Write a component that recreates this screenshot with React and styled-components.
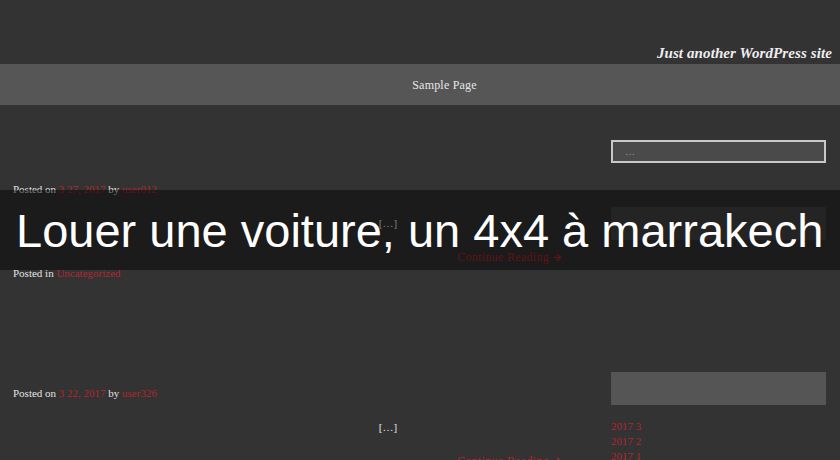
import styled, { createGlobalStyle } from "styled-components";
import { FaArrowRight } from "react-icons/fa";

const GlobalStyle = createGlobalStyle`
  html, body {
    margin: 0;
    padding: 0;
    background: #333;
  }
`;

const Page = styled.div`
  position: relative;
  width: 840px;
  height: 460px;
  overflow: hidden;
  background: #333333;
  font-family: "Liberation Serif", "DejaVu Serif", serif;
  color: #e2e2e2;
`;

const Header = styled.header`
  height: 64px;
  display: flex;
  justify-content: flex-end;
  align-items: flex-end;
  padding-right: 8px;
  box-sizing: border-box;

  .tagline {
    font-size: 15px;
    font-weight: bold;
    font-style: italic;
    color: #eeeeee;
    line-height: 1;
    margin-bottom: 3px;
    letter-spacing: 0.1px;
  }
`;

const Nav = styled.nav`
  height: 41px;
  background: #565656;
  display: flex;
  justify-content: center;
  align-items: center;
  font-size: 12px;
  color: #e6e6e6;

  span {
    padding-left: 49px;
    padding-top: 2px;
    letter-spacing: 0.2px;
  }
`;

const Main = styled.div`
  display: flex;
  align-items: flex-start;
`;

const Content = styled.main`
  width: 611px;
  flex-shrink: 0;
`;

const Post = styled.article`
  padding: 77px 0 0 13px;
  margin-bottom: 29px;
  font-size: 11px;
  line-height: 14px;
`;

const Meta = styled.div`
  color: #e2e2e2;
  margin-top: ${p => p.$gap || 0}px;
`;

const Link = styled.a`
  color: #b0282e;
  text-decoration: none;
`;

const Excerpt = styled.div`
  width: 553px;
  text-align: center;
  padding-left: 197px;
  box-sizing: border-box;
  margin-top: 20px;
  color: #e6e6e6;
`;

const More = styled.div`
  width: 553px;
  text-align: right;
  padding-right: 4px;
  box-sizing: border-box;
  margin-top: 20px;
  font-size: 12px;

  a {
    display: inline-flex;
    align-items: center;
    gap: 4px;
    letter-spacing: 0.3px;
  }
`;

const Sidebar = styled.aside`
  width: 215px;
  padding-top: 35px;
`;

const Search = styled.input`
  display: block;
  width: 215px;
  height: 23px;
  box-sizing: border-box;
  background: #4a4a4a;
  border: 2px solid #c8c8c8;
  padding: 0 12px;
  font-family: "Liberation Serif", serif;
  font-size: 10px;
  color: #ccc;
  outline: none;

  &::placeholder {
    color: #999;
  }
`;

const WidgetTitle = styled.div`
  height: 33px;
  background: ${p => p.$bg};
  margin-top: ${p => p.$gap}px;
`;

const ArchiveList = styled.ul`
  list-style: none;
  margin: 14px 0 0;
  padding: 0;
  font-size: 11px;
  line-height: 15px;
`;

const Overlay = styled.div`
  position: absolute;
  left: 0;
  right: 0;
  top: 190px;
  height: 80px;
  background: rgba(0, 0, 0, 0.47);
  display: flex;
  align-items: center;
  padding-left: 16px;
  box-sizing: border-box;

  h1 {
    margin: 0;
    font-family: "Liberation Sans", Arial, sans-serif;
    font-weight: normal;
    font-size: 47px;
    color: #ffffff;
    white-space: nowrap;
  }
`;

const posts = [
  { date: "3 27, 2017", user: "user012", category: "Uncategorized" },
  { date: "3 22, 2017", user: "user326", category: "Uncategorized" },
];

export default function App() {
  return (
    <Page>
      <GlobalStyle />
      <Header>
        <span className="tagline">Just another WordPress site</span>
      </Header>
      <Nav>
        <span>Sample Page</span>
      </Nav>
      <Main>
        <Content>
          {posts.map(p => (
            <Post key={p.user}>
              <Meta>
                Posted on <Link href="#">{p.date}</Link> by <Link href="#">{p.user}</Link>
              </Meta>
              <Excerpt>[…]</Excerpt>
              <More>
                <Link href="#">
                  Continue Reading <FaArrowRight size={9} />
                </Link>
              </More>
              <Meta $gap={2}>
                Posted in <Link href="#">{p.category}</Link>
              </Meta>
            </Post>
          ))}
        </Content>
        <Sidebar>
          <Search placeholder="…" />
          <WidgetTitle $bg="#444444" $gap={44} />
          <WidgetTitle $bg="#555555" $gap={132} />
          <ArchiveList>
            <li><Link href="#">2017 3</Link></li>
            <li><Link href="#">2017 2</Link></li>
            <li><Link href="#">2017 1</Link></li>
          </ArchiveList>
        </Sidebar>
      </Main>
      <Overlay>
        <h1>Louer une voiture, un 4x4 à marrakech</h1>
      </Overlay>
    </Page>
  );
}
